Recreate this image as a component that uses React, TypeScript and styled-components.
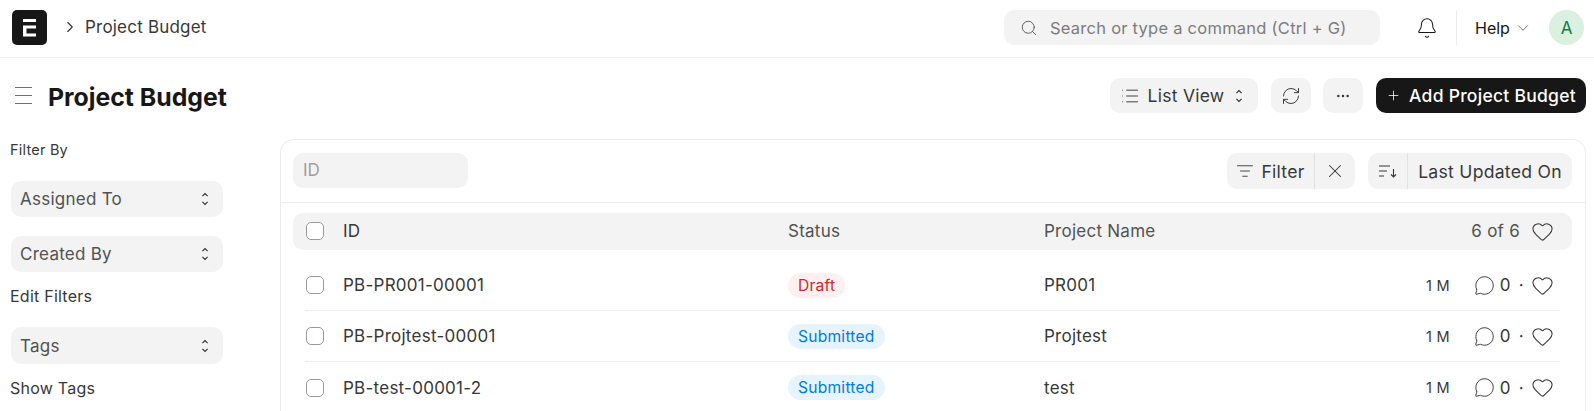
import React from "react";
import styled, { createGlobalStyle } from "styled-components";
import {
  Bell,
  ChevronDown,
  ChevronRight,
  Ellipsis,
  Heart,
  List,
  ListFilter,
  MessageCircle,
  Plus,
  RefreshCw,
  Search,
  X,
} from "lucide-react";

const GlobalStyle = createGlobalStyle`
  html, body { margin: 0; padding: 0; background: #fff; }
  body {
    font-family: Inter, "Liberation Sans", sans-serif;
    color: #171717;
    overflow: hidden;
  }
  * { box-sizing: border-box; }
`;

const Page = styled.div`
  width: 1594px;
  height: 411px;
  overflow: hidden;
`;

const Navbar = styled.header`
  height: 58px;
  display: flex;
  align-items: flex-start;
  padding: 10px 10px 0 12px;
  border-bottom: 1px solid #ededed;
`;

const Crumb = styled.div`
  height: 33px;
  margin-left: 14px;
  display: flex;
  align-items: center;
  gap: 6px;
  font-size: 17px;
  letter-spacing: 0.012em;
  color: #383838;
`;

const SearchBox = styled.div`
  width: 376px;
  height: 35px;
  margin-left: auto;
  padding-left: 16px;
  display: flex;
  align-items: center;
  gap: 12px;
  background: #f3f3f3;
  border-radius: 10px;
  font-size: 16.5px;
  letter-spacing: 0.015em;
  color: #7c7c7c;
`;

const BellWrap = styled.div`
  width: 76px;
  height: 35px;
  display: flex;
  align-items: center;
  justify-content: center;
  padding-left: 32px;
  padding-right: 14px;
  color: #171717;
`;

const NavDivider = styled.div`
  width: 1px;
  height: 35px;
  background: #ededed;
`;

const HelpMenu = styled.div`
  height: 35px;
  width: 74px;
  margin-left: 18px;
  display: flex;
  align-items: center;
  gap: 4px;
  font-size: 16px;
  color: #171717;
`;

const Avatar = styled.div`
  width: 35px;
  height: 35px;
  border-radius: 50%;
  display: flex;
  align-items: center;
  justify-content: center;
  background: #daf0e1;
  color: #16794c;
  font-size: 17px;
`;

const PageHead = styled.div`
  height: 81px;
  display: flex;
  align-items: flex-start;
  padding: 20px 8px 0 15px;
`;

const Title = styled.h1`
  margin: 0 0 0 16px;
  height: 35px;
  line-height: 38px;
  font-size: 24.8px;
  font-weight: 700;
  color: #171717;
  flex: 1;
`;

const Hamburger = styled.div`
  width: 17px;
  height: 35px;
  display: flex;
  flex-direction: column;
  justify-content: center;
  gap: 7px;
`;

const HamburgerLine = styled.span`
  display: block;
  height: 1px;
  background: #707070;
`;

const Actions = styled.div`
  display: flex;
  align-items: center;
`;

const GrayButton = styled.button<{ $w: number; $ml?: number; $pr?: number }>`
  width: ${(p) => p.$w}px;
  height: 35px;
  margin-left: ${(p) => p.$ml ?? 0}px;
  padding: 0 ${(p) => p.$pr ?? 0}px 0 0;
  border: 0;
  border-radius: 10px;
  background: #f3f3f3;
  display: flex;
  align-items: center;
  justify-content: center;
  gap: 8px;
  font: inherit;
  font-size: 17.5px;
  letter-spacing: 0.015em;
  color: #383838;
`;

const ListLabel = styled.span`
  margin-right: 3px;
`;

const PrimaryButton = styled.button`
  width: 210px;
  height: 35px;
  margin-left: 13px;
  padding: 0;
  border: 0;
  border-radius: 10px;
  background: #171717;
  color: #fff;
  display: flex;
  align-items: center;
  justify-content: center;
  gap: 8px;
  font: inherit;
  font-size: 17.5px;
  font-weight: 500;
  letter-spacing: 0.015em;
`;

const Body = styled.div`
  display: flex;
  align-items: flex-start;
`;

const Sidebar = styled.aside`
  width: 280px;
  flex: none;
  padding: 1px 0 0 10px;
`;

const SideLabel = styled.div<{ $mt: number; $fs?: number }>`
  margin-top: ${(p) => p.$mt}px;
  height: 20px;
  line-height: 20px;
  font-size: ${(p) => p.$fs ?? 14}px;
  letter-spacing: 0.015em;
  color: #383838;
`;

const SideSelect = styled.div<{ $mt: number; $h?: number }>`
  width: 212px;
  height: ${(p) => p.$h ?? 36}px;
  margin-top: ${(p) => p.$mt}px;
  margin-left: 1px;
  padding: 0 14px 0 9px;
  display: flex;
  align-items: center;
  justify-content: space-between;
  background: #f3f3f3;
  border-radius: 10px;
  font-size: 17px;
  letter-spacing: 0.015em;
  color: #525252;
`;

const Panel = styled.section`
  width: 1306px;
  flex: none;
  height: 300px;
  border: 1px solid #ededed;
  border-bottom: 0;
  border-radius: 14px 14px 0 0;
`;

const Toolbar = styled.div`
  height: 63px;
  padding: 13px 13px 0 12px;
  display: flex;
  align-items: flex-start;
  border-bottom: 1px solid #ededed;
`;

const IdInput = styled.div`
  width: 175px;
  height: 35px;
  line-height: 35px;
  padding-left: 10px;
  margin-right: auto;
  background: #f3f3f3;
  border-radius: 10px;
  font-size: 17px;
  color: #a0a0a0;
`;

const ButtonGroup = styled.div<{ $w: number; $ml?: number }>`
  width: ${(p) => p.$w}px;
  height: 36px;
  margin-left: ${(p) => p.$ml ?? 0}px;
  display: flex;
  align-items: stretch;
  background: #f3f3f3;
  border-radius: 10px;
  font-size: 17.6px;
  letter-spacing: 0.015em;
  color: #383838;
`;

const GroupPart = styled.div<{ $w: number; $line?: boolean }>`
  width: ${(p) => p.$w}px;
  flex: none;
  display: flex;
  align-items: center;
  justify-content: center;
  gap: 7px;
  border-right: ${(p) => (p.$line ? "1px solid #e2e2e2" : "0")};
`;

const HeadRow = styled.div`
  height: 37px;
  margin: 10px 13px 0 12px;
  padding: 0 0 1px 13px;
  display: flex;
  align-items: center;
  background: #f3f3f3;
  border-radius: 10px;
  font-size: 17px;
  letter-spacing: 0.015em;
  color: #525252;
`;

const Check = styled.span`
  width: 18px;
  height: 18px;
  flex: none;
  background: #fff;
  border: 1px solid #9a9a9a;
  border-radius: 5px;
`;

const IdCell = styled.div<{ $dark?: boolean }>`
  width: 445px;
  margin-left: 19px;
  flex: none;
  color: ${(p) => (p.$dark ? "#383838" : "inherit")};
`;

const StatusCell = styled.div`
  width: 256px;
  flex: none;
`;

const NameCell = styled.div`
  width: 300px;
  flex: none;
`;

const CountText = styled.div`
  margin-left: auto;
  display: flex;
  align-items: center;
  gap: 11px;
  padding-right: 18px;
  color: #525252;
`;

const Rows = styled.div`
  padding: 10px 13px 0 12px;
`;

const Row = styled.div<{ $last?: boolean }>`
  height: 51px;
  margin: 0 12px;
  padding-left: 1px;
  padding-right: 6px;
  display: flex;
  align-items: center;
  border-bottom: ${(p) => (p.$last ? "0" : "1px solid #ededed")};
  font-size: 17px;
  letter-spacing: 0.015em;
  color: #383838;
`;

const Badge = styled.span<{ $tone: "red" | "blue" }>`
  display: inline-block;
  height: 25px;
  line-height: 25px;
  padding: 0 10px;
  border-radius: 13px;
  font-size: 15.6px;
  letter-spacing: 0.015em;
  background: ${(p) => (p.$tone === "red" ? "#fff0f0" : "#e6f4ff")};
  color: ${(p) => (p.$tone === "red" ? "#cc2929" : "#007be0")};
`;

const Meta = styled.div`
  margin-left: auto;
  display: flex;
  align-items: center;
  color: #525252;
  font-size: 17px;
`;

const Age = styled.span`
  font-size: 14.5px;
  margin-right: 24px;
  color: #383838;
`;

const CommentCount = styled.span`
  margin-left: 5px;
  color: #383838;
`;

const Dot = styled.span`
  margin: 0 7px 0 8px;
  color: #383838;
`;

function Logo() {
  return (
    <svg width="35" height="35" viewBox="0 0 35 35" aria-hidden="true">
      <rect width="35" height="35" rx="5" fill="#171717" />
      <path
        d="M11 9h13v3H11zM11 15.5h13v3h-9.5v5H24v3H11z"
        fill="#fff"
      />
    </svg>
  );
}

function SortIcon() {
  return (
    <svg width="20" height="16" viewBox="0 0 20 16" fill="none" stroke="#383838" strokeWidth="1.1" aria-hidden="true">
      <path d="M1 3h11M1 8h8M1 13h5M15.5 6v8M13 11.5l2.5 2.5 2.5-2.5" />
    </svg>
  );
}

function UpDown() {
  return (
    <svg width="8" height="14" viewBox="0 0 8 14" fill="none" stroke="#2b2b2b" strokeWidth="1.05" aria-hidden="true">
      <path d="M1.4 4.2L4 1.6l2.6 2.6M1.4 9.8L4 12.4l2.6-2.6" />
    </svg>
  );
}

const rows = [
  { id: "PB-PR001-00001", status: "Draft", tone: "red" as const, name: "PR001" },
  { id: "PB-Projtest-00001", status: "Submitted", tone: "blue" as const, name: "Projtest" },
  { id: "PB-test-00001-2", status: "Submitted", tone: "blue" as const, name: "test" },
];

export default function App() {
  return (
    <Page>
      <GlobalStyle />
      <Navbar>
        <Logo />
        <Crumb>
          <ChevronRight size={18} strokeWidth={1.5} />
          Project Budget
        </Crumb>
        <SearchBox>
          <Search size={18} strokeWidth={1.2} color="#525252" />
          Search or type a command (Ctrl + G)
        </SearchBox>
        <BellWrap>
          <Bell size={22} strokeWidth={1.15} />
        </BellWrap>
        <NavDivider />
        <HelpMenu>
          Help
          <ChevronDown size={18} strokeWidth={1.05} color="#525252" />
        </HelpMenu>
        <Avatar>A</Avatar>
      </Navbar>

      <PageHead>
        <Hamburger>
          <HamburgerLine />
          <HamburgerLine />
          <HamburgerLine />
        </Hamburger>
        <Title>Project Budget</Title>
        <Actions>
          <GrayButton $w={148} $pr={5}>
            <List size={20} strokeWidth={1.15} />
            <ListLabel>List View</ListLabel>
            <UpDown />
          </GrayButton>
          <GrayButton $w={40} $ml={13}>
            <RefreshCw size={20} strokeWidth={1.15} />
          </GrayButton>
          <GrayButton $w={40} $ml={12}>
            <Ellipsis size={16} strokeWidth={1.75} />
          </GrayButton>
          <PrimaryButton>
            <Plus size={15} strokeWidth={1.25} />
            Add Project Budget
          </PrimaryButton>
        </Actions>
      </PageHead>

      <Body>
        <Sidebar>
          <SideLabel $mt={0} $fs={14.5}>Filter By</SideLabel>
          <SideSelect $mt={21}>
            Assigned To
            <UpDown />
          </SideSelect>
          <SideSelect $mt={19}>
            Created By
            <UpDown />
          </SideSelect>
          <SideLabel $mt={14} $fs={16}>Edit Filters</SideLabel>
          <SideSelect $mt={21} $h={37}>
            Tags
            <UpDown />
          </SideSelect>
          <SideLabel $mt={14} $fs={16}>Show Tags</SideLabel>
        </Sidebar>

        <Panel>
          <Toolbar>
            <IdInput>ID</IdInput>
            <ButtonGroup $w={128}>
              <GroupPart $w={88} $line>
                <ListFilter size={18} strokeWidth={1.2} />
                Filter
              </GroupPart>
              <GroupPart $w={40}>
                <X size={22} strokeWidth={1.1} />
              </GroupPart>
            </ButtonGroup>
            <ButtonGroup $w={204} $ml={13}>
              <GroupPart $w={40} $line>
                <SortIcon />
              </GroupPart>
              <GroupPart $w={164}>Last Updated On</GroupPart>
            </ButtonGroup>
          </Toolbar>

          <HeadRow>
            <Check />
            <IdCell $dark>ID</IdCell>
            <StatusCell>Status</StatusCell>
            <NameCell>Project Name</NameCell>
            <CountText>
              6 of 6
              <Heart size={23} strokeWidth={1.1} color="#383838" />
            </CountText>
          </HeadRow>

          <Rows>
            {rows.map((row, index) => (
              <Row key={row.id} $last={index === rows.length - 1}>
                <Check />
                <IdCell>{row.id}</IdCell>
                <StatusCell>
                  <Badge $tone={row.tone}>{row.status}</Badge>
                </StatusCell>
                <NameCell>{row.name}</NameCell>
                <Meta>
                  <Age>1 M</Age>
                  <MessageCircle size={21} strokeWidth={1.1} color="#383838" />
                  <CommentCount>0</CommentCount>
                  <Dot>·</Dot>
                  <Heart size={23} strokeWidth={1.1} color="#383838" />
                </Meta>
              </Row>
            ))}
          </Rows>
        </Panel>
      </Body>
    </Page>
  );
}
